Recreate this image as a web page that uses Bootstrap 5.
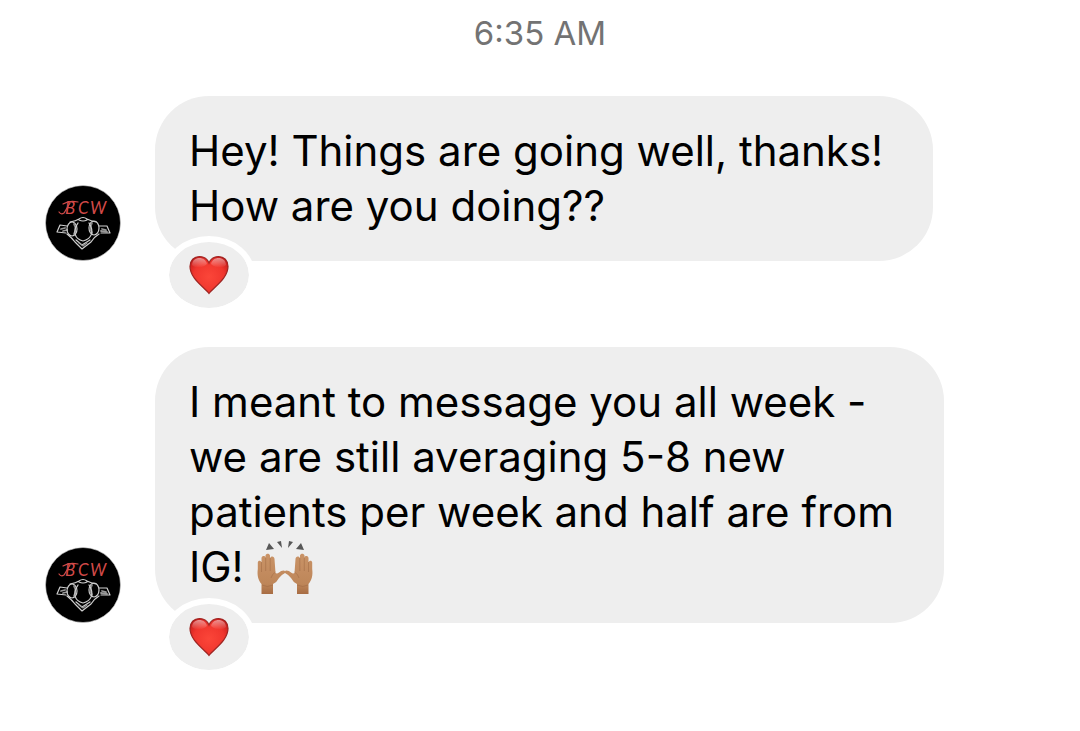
<!DOCTYPE html>
<html lang="en">
<head>
<meta charset="utf-8">
<meta name="viewport" content="width=device-width, initial-scale=1">
<title>Messages</title>
<link href="https://cdn.jsdelivr.net/npm/bootstrap@5.3.0/dist/css/bootstrap.min.css" rel="stylesheet">
<style>
  body { font-family: Inter, "Liberation Sans", sans-serif; background: #fff; color: #000; }
  .chat { padding: 14px 45px 60px; }
  .stamp { font-size: 33px; line-height: 38px; color: #737373; margin-bottom: 44px; }
  .message { gap: 34px; margin-bottom: 86px; }
  .avatar { width: 76px; height: 76px; }
  .bubble { background: #eee; border-radius: 54px; padding: 27px 50px 28px 34px; font-size: 42px; line-height: 55px; }
  .reaction { left: 8px; bottom: -53px; width: 92px; height: 78px; border: 6px solid #fff; border-radius: 46px / 39px; background: #eee; background-clip: padding-box; }
  .heart { width: 40px; height: 40px; }
  .hands { width: 58px; height: 54px; vertical-align: -13px; }
</style>
</head>
<body>
<svg width="0" height="0" class="position-absolute" aria-hidden="true">
  <defs>
    <radialGradient id="heartFill" cx="50%" cy="55%" r="62%">
      <stop offset="0" stop-color="#fb4639"/><stop offset=".65" stop-color="#f0362e"/><stop offset="1" stop-color="#c91c1b"/>
    </radialGradient>
    <linearGradient id="heartShine" x1="0" y1="0" x2="0" y2="1">
      <stop offset="0" stop-color="#fff" stop-opacity=".5"/><stop offset="1" stop-color="#fff" stop-opacity="0"/>
    </linearGradient>
    <linearGradient id="skin" x1="0" y1="0" x2="0" y2="1">
      <stop offset="0" stop-color="#c99367"/><stop offset=".75" stop-color="#be8659"/><stop offset="1" stop-color="#a76c43"/>
    </linearGradient>
    <symbol id="heart" viewBox="0 0 40 40">
      <path d="M20 38.500C15 32 1 23.500 1 11.500C1 5.500 5 1.500 10.500 1.500C15 1.500 18.500 4 20 8C21.500 4 25 1.500 29.500 1.500C35 1.500 39 5.500 39 11.500C39 23.500 25 32 20 38.500Z" fill="url(#heartFill)" stroke="#9e2522" stroke-width="1.200"/>
      <path d="M3 10C3.500 5 6.500 3 10.500 3C14 3 17 5 18 9C14 13 7 14 3 10Z" fill="url(#heartShine)"/>
      <path d="M37 10C36.500 5 33.500 3 29.500 3C26 3 23 5 22 9C26 13 33 14 37 10Z" fill="url(#heartShine)"/>
    </symbol>
    <symbol id="avatar" viewBox="0 0 76 76">
      <circle cx="38" cy="38" r="37.500" fill="#000" stroke="#d5d5d5" stroke-width=".6"/>
      <text x="20 33 45" y="29" font-family="Lato, 'Liberation Sans', sans-serif" font-size="17" font-style="italic" fill="#d24a48">BCW</text>
      <path d="M14 27Q16 30 19 28L25 18M18 19Q24 15 33 17" fill="none" stroke="#d24a48" stroke-width="1.200" stroke-linecap="round"/>
      <g fill="none" stroke="#cfcfcf" stroke-width="1.200" stroke-linejoin="round" stroke-linecap="round">
        <path d="M25 37Q31 36 34 34Q38 31 42 34Q46 36 51 37M34 35Q38 37 42 35"/>
        <path d="M22 41L15 40L12 47L21 48M54 41L62 41L65 48L56 48"/>
        <path d="M16 44L20 43M18 46L22 45M57 44L61 45M56 46L62 47" stroke="#999" stroke-width="1.800"/>
        <ellipse cx="27" cy="44" rx="5" ry="7"/>
        <ellipse cx="49" cy="43" rx="5" ry="7"/>
        <path d="M29 39Q32 44 29 49M47 38Q44 43 47 48" stroke="#888" stroke-width="1.800"/>
        <path d="M33 38C27 47 30 54 38 56C46 54 50 47 44 38"/>
        <path d="M22 49Q27 53 30 57L37 64L46 57Q49 52 54 49M31 55L37 60L45 55"/>
        <path d="M34 58L38 61L42 58" stroke="#999"/>
      </g>
    </symbol>
    <symbol id="hand" viewBox="0 0 29 42">
      <path d="M4.500 41V31C1 27 0 22 .8 16V9.500C1 7 4 7 4.500 9.500V5C5 2.500 8 2.500 8.500 4.500V2.500C9 0 12.500 0 13 2.500V5C14 2.500 17.500 3 17.500 6L18.500 20Q20 21 22 19.500Q24 17.500 26.500 17.500Q29 18 28 20Q24 22 22 25Q20 29 16 31V41Z" fill="url(#skin)"/>
      <path d="M4.500 9V19M8.700 5V18M13.200 5V18M18.500 19Q15 21 14 25M5 32Q10 35 16 32" fill="none" stroke="#98633f" stroke-width=".8" opacity=".55"/>
    </symbol>
    <symbol id="hands" viewBox="0 0 58 54">
      <use href="#hand" x="1" y="12" width="29" height="42"/>
      <g transform="translate(58 0) scale(-1 1)"><use href="#hand" x="1" y="12" width="29" height="42"/></g>
      <path d="M13 2L18 8L10 9ZM21 1L25 0L26 7ZM37 1L33 0L32 7ZM45 2L40 8L48 9Z" fill="#575757"/>
    </symbol>
  </defs>
</svg>

<main class="chat container-fluid">
  <div class="stamp text-center">6:35 AM</div>

  <article class="message d-flex align-items-end">
    <svg class="avatar flex-shrink-0" role="img" aria-label="BCW"><use href="#avatar"/></svg>
    <div class="bubble position-relative">
      Hey! Things are going well, thanks!<br>How are you doing??
      <span class="reaction position-absolute d-flex align-items-center justify-content-center">
        <svg class="heart" role="img" aria-label="Heart"><use href="#heart"/></svg>
      </span>
    </div>
  </article>

  <article class="message d-flex align-items-end mb-0">
    <svg class="avatar flex-shrink-0" role="img" aria-label="BCW"><use href="#avatar"/></svg>
    <div class="bubble position-relative">
      I meant to message you all week -<br>we are still averaging 5-8 new<br>patients per week and half are from<br>IG! <svg class="hands" role="img" aria-label="Raised hands"><use href="#hands"/></svg>
      <span class="reaction position-absolute d-flex align-items-center justify-content-center">
        <svg class="heart" role="img" aria-label="Heart"><use href="#heart"/></svg>
      </span>
    </div>
  </article>
</main>
<script src="https://cdn.jsdelivr.net/npm/bootstrap@5.3.0/dist/js/bootstrap.bundle.min.js"></script>
</body>
</html>
